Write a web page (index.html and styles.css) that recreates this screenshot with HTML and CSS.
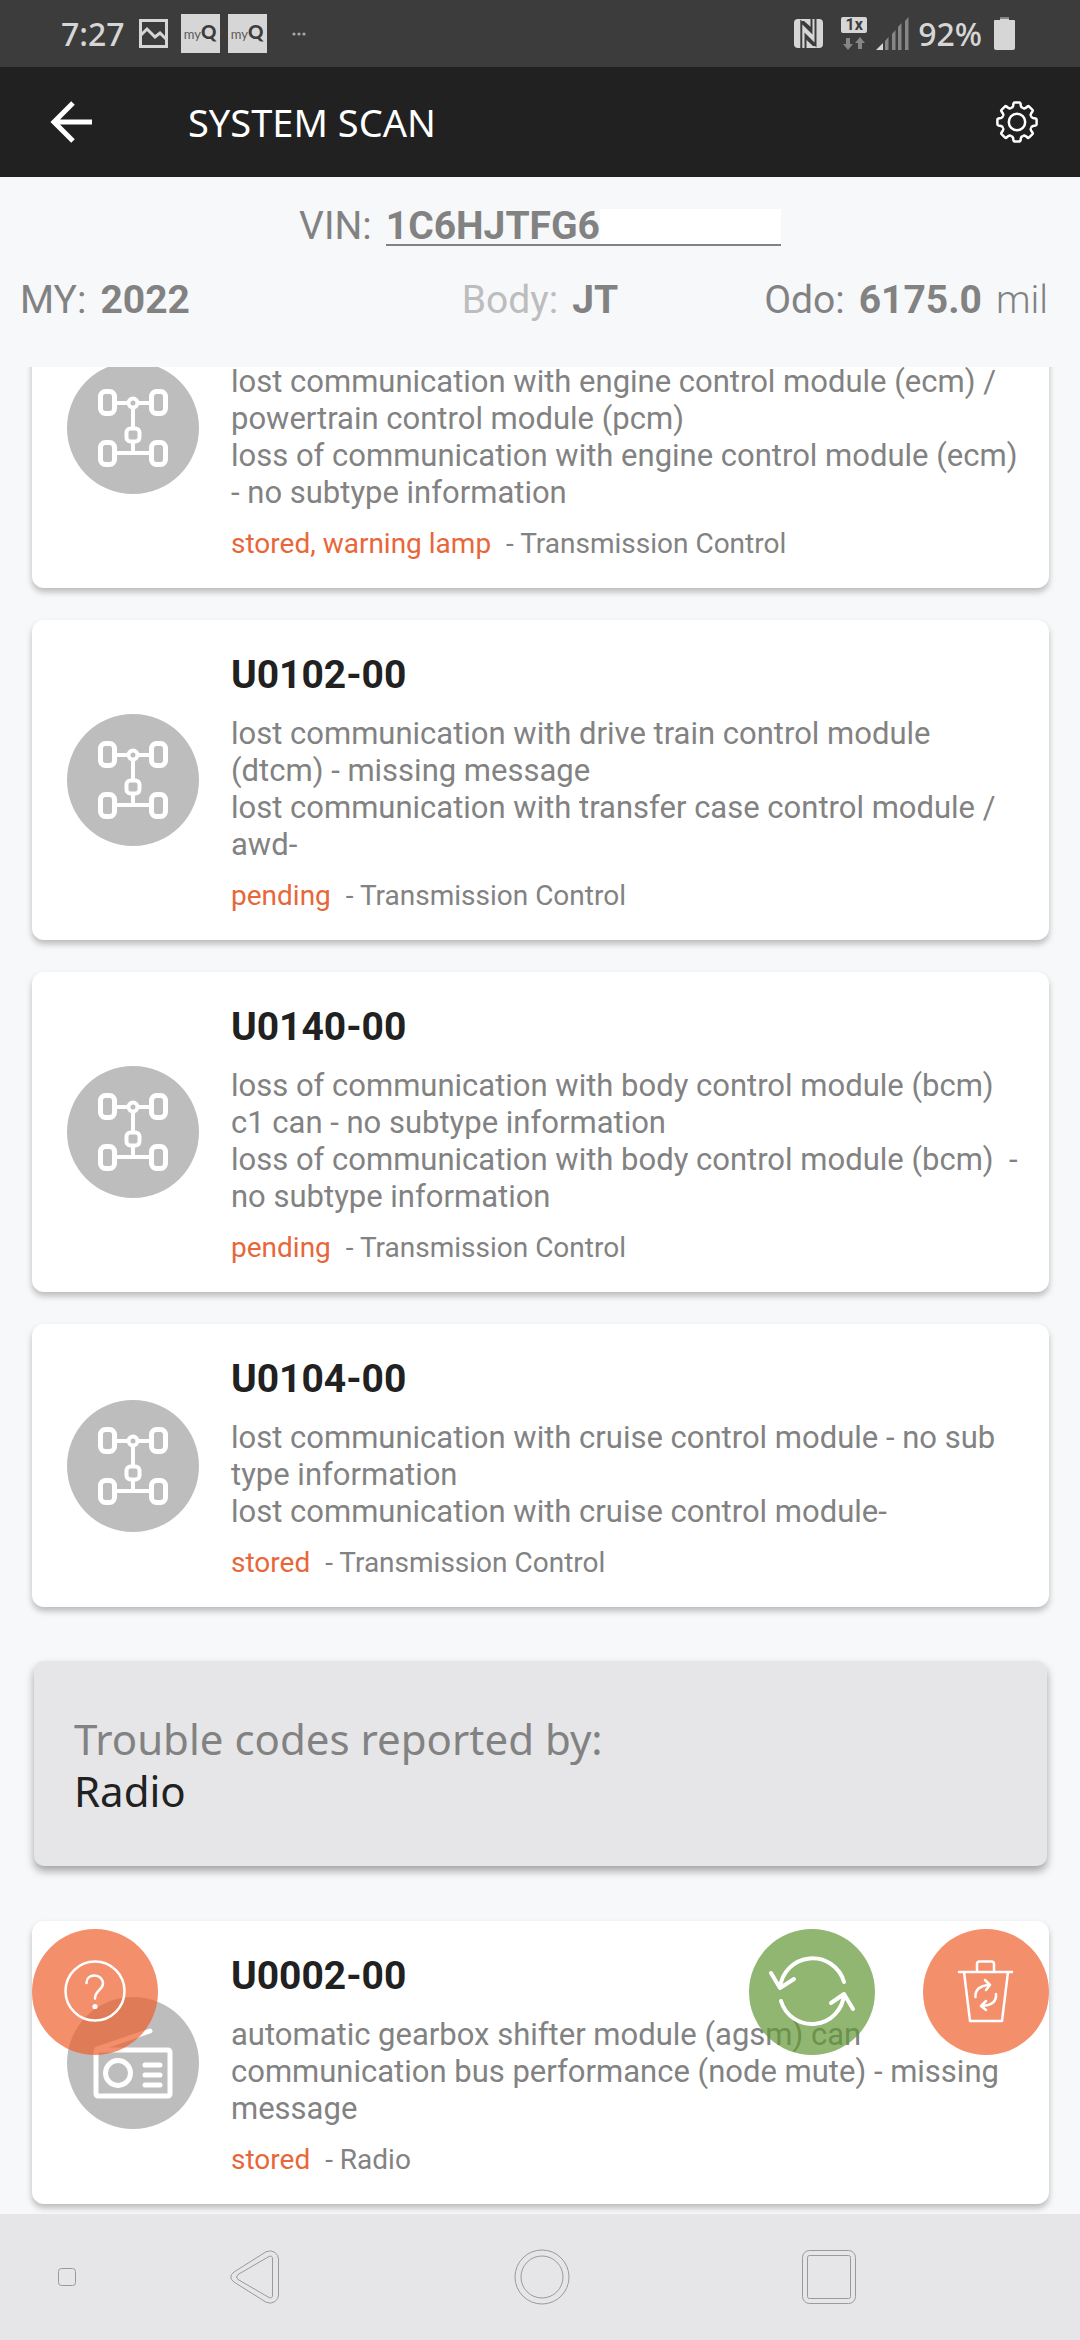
FILE: index.html
```html
<!DOCTYPE html>
<html lang="en">
  <head>
    <meta charset="utf-8">
    <meta name="viewport" content="width=device-width, initial-scale=1">
    <title>System Scan</title>
    <link rel="stylesheet" href="styles.css">
  </head>

  <body>
    <!-- shared icons -->
    <svg class="sprite" aria-hidden="true">
      <symbol id="icon-drivetrain" viewBox="0 0 132 132">
        <g fill="none" stroke="#fff" stroke-width="5">
          <rect x="33.500" y="29.500" width="14" height="22" rx="5" />
          <rect x="84.500" y="29.500" width="14" height="22" rx="5" />
          <rect x="33.500" y="80.500" width="14" height="22" rx="5" />
          <rect x="84.500" y="80.500" width="14" height="22" rx="5" />
          <circle cx="66" cy="41" r="4.500" stroke-width="4" />
          <rect x="59.500" y="66.500" width="13" height="13" rx="4" stroke-width="4" />
          <path d="M50 41H61M71 41H82M66 46V66M66 80V91M50 91H82" stroke-width="4" />
        </g>
      </symbol>
      <symbol id="gear-tooth" viewBox="-21 -21 42 42">
        <path d="M-5.900 -14.200Q-4.200 -14.400 -3.900 -16L-3.500 -18.600Q-3.300 -19.600 -2.300 -19.600H2.300Q3.300 -19.600 3.500 -18.600L3.900 -16Q4.200 -14.400 5.900 -14.200" fill="none" stroke="#fff" stroke-width="2.500" />
      </symbol>
    </svg>

    <div class="status-bar">
      <span class="time">7:27</span>
      <svg class="picture" width="29" height="29" viewBox="0 0 29 29">
        <rect x="1.500" y="1.500" width="26" height="26" fill="none" stroke="#d6d6d6" stroke-width="3" />
        <path d="M2 16L8 10L16 18L21 14L27 20" fill="none" stroke="#d6d6d6" stroke-width="3" />
      </svg>
      <span class="myq">my<b>Q</b></span>
      <span class="myq">my<b>Q</b></span>
      <svg class="dots" width="14" height="4" viewBox="0 0 14 4" fill="#a8a8a8">
        <circle cx="2" cy="2" r="1.600" /><circle cx="7" cy="2" r="1.600" /><circle cx="12" cy="2" r="1.600" />
      </svg>

      <svg class="nfc" width="29" height="29" viewBox="0 0 29 29">
        <rect width="29" height="29" rx="4" fill="#d6d6d6" />
        <path d="M7.300 29V3L17.500 13V0M21.500 0V26L11.500 16V29" fill="none" stroke="#3c3c3c" stroke-width="2" />
        <path d="M7.300 2L18 13.400V9L10 2ZM21.500 27L11.500 15.600V20L19 27Z" fill="#3c3c3c" />
      </svg>
      <span class="network">
        <span class="network-type">1x</span>
        <svg width="22" height="13" viewBox="0 0 22 13" fill="#868686">
          <path d="M3 1H7V7H10L5 13L0 7H3ZM15 12H19V6H22L17 0L12 6H15Z" />
        </svg>
      </span>
      <svg class="signal" width="33" height="33" viewBox="0 0 33 33" fill="#868686">
        <path d="M0 33L7 26V33Z" fill="#d6d6d6" />
        <path d="M9 24L12.500 20V33H9ZM16 17L19.500 13V33H16ZM22 10L25.500 6V33H22ZM29 4L32.500 0V33H29Z" />
      </svg>
      <span class="percent">92%</span>
      <svg width="21" height="33" viewBox="0 0 21 33">
        <rect x="6" width="9" height="3" fill="#868686" />
        <path d="M6 2H15V3H20Q21 3 21 4V31Q21 33 19 33H2Q0 33 0 31V4Q0 3 1 3H6Z" fill="#d6d6d6" />
      </svg>
    </div>

    <header class="app-bar">
      <button class="icon-btn" aria-label="Back">
        <svg width="42" height="42" viewBox="0 0 42 42" fill="none" stroke="#fff" stroke-width="5">
          <path d="M23 2L4 21L23 40M4 21H42" />
        </svg>
      </button>
      <h1>SYSTEM SCAN</h1>
      <button class="icon-btn" aria-label="Settings">
        <svg width="42" height="42" viewBox="0 0 42 42">
          <use href="#gear-tooth" width="42" height="42" />
          <use href="#gear-tooth" width="42" height="42" transform="rotate(45 21 21)" />
          <use href="#gear-tooth" width="42" height="42" transform="rotate(90 21 21)" />
          <use href="#gear-tooth" width="42" height="42" transform="rotate(135 21 21)" />
          <use href="#gear-tooth" width="42" height="42" transform="rotate(180 21 21)" />
          <use href="#gear-tooth" width="42" height="42" transform="rotate(225 21 21)" />
          <use href="#gear-tooth" width="42" height="42" transform="rotate(270 21 21)" />
          <use href="#gear-tooth" width="42" height="42" transform="rotate(315 21 21)" />
          <circle cx="21" cy="21" r="8.200" fill="none" stroke="#fff" stroke-width="2.500" />
        </svg>
      </button>
    </header>

    <section class="vehicle">
      <div class="vin">
        <span>VIN:</span>
        <span class="vin-value"><b>1C6HJTFG6</b><span class="vin-mask"></span></span>
      </div>
      <div class="specs">
        <div class="spec"><span>MY:</span> <b>2022</b></div>
        <div class="spec"><span class="faded">Body:</span> <b>JT</b></div>
        <div class="spec spec-odo"><span>Odo:</span> <b>6175.0</b> <span class="unit">mil</span></div>
      </div>
    </section>

    <main class="scan">
      <div class="codes">
        <article class="card card-scrolled">
          <svg class="module-icon" viewBox="0 0 132 132"><use href="#icon-drivetrain" /></svg>
          <div class="card-text">
            <p class="desc">lost communication with engine control module (ecm) / powertrain control module (pcm)<br>loss of communication with engine control module (ecm) - no subtype information</p>
            <p class="meta"><span class="state">stored, warning lamp</span> - Transmission Control</p>
          </div>
        </article>

        <article class="card">
          <svg class="module-icon" viewBox="0 0 132 132"><use href="#icon-drivetrain" /></svg>
          <div class="card-text">
            <h2>U0102-00</h2>
            <p class="desc">lost communication with drive train control module (dtcm) - missing message<br>lost communication with transfer case control module / awd-</p>
            <p class="meta"><span class="state">pending</span> - Transmission Control</p>
          </div>
        </article>

        <article class="card">
          <svg class="module-icon" viewBox="0 0 132 132"><use href="#icon-drivetrain" /></svg>
          <div class="card-text">
            <h2>U0140-00</h2>
            <p class="desc">loss of communication with body control module (bcm) c1 can - no subtype information<br>loss of communication with body control module (bcm)&nbsp; - no subtype information</p>
            <p class="meta"><span class="state">pending</span> - Transmission Control</p>
          </div>
        </article>

        <article class="card">
          <svg class="module-icon" viewBox="0 0 132 132"><use href="#icon-drivetrain" /></svg>
          <div class="card-text">
            <h2>U0104-00</h2>
            <p class="desc">lost communication with cruise control module - no sub type information<br>lost communication with cruise control module-</p>
            <p class="meta"><span class="state">stored</span> - Transmission Control</p>
          </div>
        </article>

        <div class="group">
          <p class="group-label">Trouble codes reported by:</p>
          <p>Radio</p>
        </div>

        <article class="card">
          <svg class="module-icon" viewBox="0 0 132 132">
            <g fill="none" stroke="#fff" stroke-width="4" stroke-linecap="round">
              <rect x="29" y="53" width="74" height="46" rx="2" stroke-width="5" />
              <circle cx="51" cy="76" r="12.500" stroke-width="5" />
              <path d="M78 68H93M78 78H93M78 88H93M30 52L83 34" stroke-width="5" />
            </g>
          </svg>
          <div class="card-text">
            <h2>U0002-00</h2>
            <p class="desc">automatic gearbox shifter module (agsm) can communication bus performance (node mute) - missing message</p>
            <p class="meta"><span class="state">stored</span> - Radio</p>
          </div>
        </article>
      </div>

      <div class="actions">
        <button class="fab fab-help" aria-label="Help">
          <svg viewBox="0 0 126 126" fill="none" stroke="#fff" stroke-width="2.500" stroke-linecap="round">
            <circle cx="63" cy="62" r="29.500" />
            <path d="M54.500 54C54.500 49 58 46.500 62.500 46.500C67.500 46.500 71 50 71 54.500C71 61 63 61 63 69.500" />
            <circle cx="63" cy="77.500" r="2.600" fill="#fff" stroke="none" />
          </svg>
        </button>
        <button class="fab fab-rescan" aria-label="Scan again">
          <svg viewBox="0 0 126 126" fill="none" stroke="#fff" stroke-width="4" stroke-linecap="round" stroke-linejoin="round">
            <path d="M95 53A32.700 32.700 0 0 0 31 59M22 44L31 59L45 50" />
            <path d="M32 72A32.200 32.200 0 0 0 95 65M82 74L95 65L104 80" />
          </svg>
        </button>
        <button class="fab" aria-label="Clear codes">
          <svg viewBox="0 0 126 126" fill="none" stroke="#fff" stroke-width="2.500" stroke-linecap="round" stroke-linejoin="round">
            <path d="M36 43H89M41 43L47 92H79L85 43M54 42V35Q54 32.500 56.500 32.500H68.500Q71 32.500 71 35V42" />
            <path d="M52.500 68Q52 57 66 56M62 51L67 56L63 61M73 65Q74 76 59 77M63 72L58 77L63 81" />
          </svg>
        </button>
      </div>
    </main>

    <nav class="nav-bar">
      <button class="nav-small" aria-label="Hide navigation">
        <svg width="18" height="18" viewBox="0 0 18 18"><rect x="0.500" y="0.500" width="17" height="17" rx="3" /></svg>
      </button>
      <button aria-label="Back">
        <svg width="50" height="54" viewBox="0 0 50 54">
          <path d="M4 22L36 1.800Q41 -0.500 45 2.500Q48.500 5 48.500 9V45Q48.500 49 45 51.500Q41 54.500 36 52.200L4 32Q-2.500 27 4 22Z" />
          <path d="M8 24.500L39 6.500Q42.500 5 42.500 9V45Q42.500 49 39 47.500L8 29.500Q5 27 8 24.500Z" />
        </svg>
      </button>
      <button aria-label="Home">
        <svg width="56" height="56" viewBox="0 0 56 56"><circle cx="28" cy="28" r="27" /><circle cx="28" cy="28" r="21" /></svg>
      </button>
      <button aria-label="Recent apps">
        <svg width="54" height="54" viewBox="0 0 54 54">
          <rect x="0.500" y="0.500" width="53" height="53" rx="7" />
          <rect x="5.500" y="5.500" width="43" height="43" rx="2" />
        </svg>
      </button>
    </nav>
  </body>
</html>
```

FILE: styles.css
```css
* {
  box-sizing: border-box;
}

body {
  display: flex;
  flex-direction: column;
  height: 100vh;
  margin: 0;
  overflow: hidden;
  background-color: #f7f8fa;
  color: #828282;
  font-family: Roboto, sans-serif;
}

h1, h2, p {
  margin: 0;
}

button {
  padding: 0;
  border: none;
  background: none;
  cursor: pointer;
}

svg {
  display: block;
  flex: none;
}

.sprite {
  position: absolute;
  width: 0;
  height: 0;
}

/* phone status bar */
.status-bar {
  display: flex;
  align-items: center;
  height: 67px;
  padding: 0 65px 0 61px;
  background-color: #3c3c3c;
  color: #d6d6d6;
  font-family: "Noto Sans", sans-serif;
  font-size: 32px;
  font-weight: 500;
}

.picture {
  margin-left: 14px;
}

.myq {
  display: flex;
  align-items: baseline;
  justify-content: center;
  width: 39px;
  height: 39px;
  margin-left: 8px;
  background-color: #d6d6d6;
  color: #5a5a5a;
  font-family: Lato, sans-serif;
  font-size: 13px;
  font-weight: 400;
  line-height: 36px;
}

.picture + .myq {
  margin-left: 13px;
}

.myq b {
  color: #3c3c3c;
  font-size: 19px;
  font-weight: 900;
}

.dots {
  margin-left: 25px;
}

.nfc {
  margin-left: auto;
}

.network {
  display: flex;
  flex-direction: column;
  align-items: center;
  gap: 4px;
  margin-left: 18px;
}

.network-type {
  width: 26px;
  border-radius: 2px;
  background-color: #d6d6d6;
  color: #3c3c3c;
  font-family: Roboto, sans-serif;
  font-size: 16px;
  font-weight: 700;
  line-height: 16px;
  text-align: center;
}

.signal {
  margin-left: 9px;
}

.percent {
  margin: 0 12px 0 9px;
}

/* title bar */
.app-bar {
  display: flex;
  align-items: center;
  height: 110px;
  padding: 0 42px 0 50px;
  background-color: #212121;
  color: #fff;
}

.app-bar h1 {
  flex: 1;
  padding-left: 96px;
  font-family: "Noto Sans", sans-serif;
  font-size: 38px;
  font-weight: 400;
}

/* vehicle details */
.vehicle {
  padding: 32px 20px 43px;
  font-size: 39px;
}

.vehicle b {
  font-weight: 700;
}

.vin {
  display: flex;
  justify-content: center;
  gap: 14px;
  line-height: 35px;
}

.vin-value {
  display: flex;
  border-bottom: 2px solid #828282;
}

.vin-mask {
  width: 181px;
  background-color: #fff;
}

.specs {
  display: grid;
  grid-template-columns: 1fr auto 1fr;
  margin-top: 31px;
  line-height: 47px;
}

.spec {
  display: flex;
  gap: 14px;
}

.spec-odo {
  justify-content: flex-end;
  padding-right: 12px;
}

.faded {
  color: #bdbdbd;
}

.unit {
  font-weight: 300;
}

/* trouble codes */
.scan {
  position: relative;
  flex: 1;
  min-height: 0;
}

.codes {
  display: flex;
  flex-direction: column;
  justify-content: flex-end;
  gap: 32px;
  height: 100%;
  padding: 0 31px 10px 32px;
  overflow: hidden;
}

.card {
  display: flex;
  flex: none;
  align-items: center;
  gap: 32px;
  padding: 28px 24px 28px 35px;
  border-radius: 12px;
  background-color: #fff;
  box-shadow: 0 4px 6px rgba(0, 0, 0, 0.25);
}

.module-icon {
  width: 132px;
  height: 132px;
  border-radius: 50%;
  background-color: #bdbdbd;
}

.card-text {
  flex: 1;
  padding-top: 4px;
}

.card-scrolled .card-text {
  padding-top: 67px;
}

.card h2 {
  margin-bottom: 16px;
  color: #212121;
  font-size: 39px;
  font-weight: 700;
  line-height: 47px;
}

.desc {
  font-size: 31px;
  line-height: 37px;
}

.meta {
  margin-top: 16px;
  font-size: 28px;
  line-height: 33px;
}

.state {
  margin-right: 8px;
  color: #e8673a;
}

.group {
  flex: none;
  margin: 22px 2px 23px;
  padding: 52px 40px 49px;
  border-radius: 10px;
  background-color: #e6e6e8;
  box-shadow: 0 5px 8px rgba(0, 0, 0, 0.35);
  color: #212121;
  font-family: "Noto Sans", sans-serif;
  font-size: 42px;
  line-height: 52px;
}

.group-label {
  color: #828282;
}

/* floating buttons */
.actions {
  position: absolute;
  right: 31px;
  bottom: 159px;
  left: 32px;
  display: flex;
  gap: 48px;
}

.fab {
  width: 126px;
  height: 126px;
  border-radius: 50%;
  background-color: rgba(239, 96, 45, 0.7);
}

.fab-help {
  margin-right: auto;
}

.fab-rescan {
  background-color: rgba(99, 151, 54, 0.7);
}

/* android navigation */
.nav-bar {
  display: grid;
  grid-template-columns: 112px 1fr 1fr 1fr 108px;
  height: 126px;
  background-color: #e6e6e8;
}

.nav-bar button {
  display: flex;
  align-items: center;
  justify-content: center;
}

.nav-bar svg {
  fill: none;
  stroke: #9a9a9a;
  stroke-width: 1;
}

.nav-small {
  padding-left: 22px;
}
```
